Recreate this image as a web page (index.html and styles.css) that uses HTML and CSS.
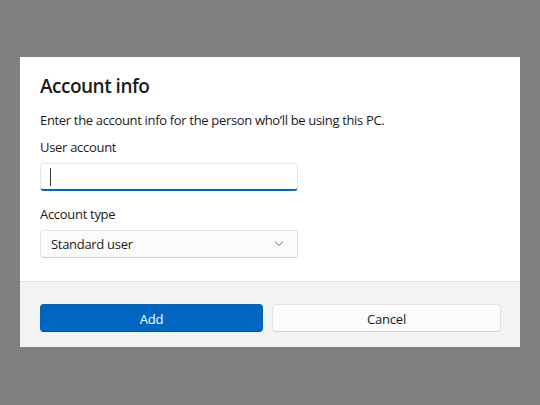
FILE: index.html
```html
<!DOCTYPE html>
<html>
<head>
<meta charset="utf-8">
<link rel="stylesheet" href="styles.css">
</head>
<body>
<div class="dialog">
  <div class="content">
    <h1 class="title">Account info</h1>
    <p class="desc">Enter the account info for the person who’ll be using this PC.</p>
    <div class="label">User account</div>
    <div class="input"><span class="caret"></span></div>
    <div class="label label2">Account type</div>
    <div class="select">
      <span>Standard user</span>
      <svg class="chev" width="10" height="6" viewBox="0 0 10 6"><path d="M1.5 1 L5 4.5 L8.5 1" fill="none" stroke="#6a6a6a" stroke-width="1" stroke-linecap="round" stroke-linejoin="round"/></svg>
    </div>
  </div>
  <div class="footer">
    <button class="btn primary">Add</button>
    <button class="btn secondary">Cancel</button>
  </div>
</div>
</body>
</html>
```

FILE: styles.css
```css
html, body {
  margin: 0;
  padding: 0;
}
body {
  background: #808080;
  width: 540px;
  height: 405px;
  overflow: hidden;
  font-family: "Open Sans", "Noto Sans", sans-serif;
  color: #1b1b1b;
  padding-top: 57px;
  box-sizing: border-box;
}
.dialog {
  width: 500px;
  height: 290px;
  margin-left: 20px;
  background: #ffffff;
  display: flex;
  flex-direction: column;
}
.content {
  flex: 1;
  padding: 15px 20px 0 20px;
}
.title {
  margin: 0;
  font-size: 19px;
  line-height: 28px;
  font-weight: 600;
  letter-spacing: -0.5px;
}
.desc {
  margin: 10px 0 0 0;
  font-size: 13px;
  line-height: 20px;
  letter-spacing: -0.33px;
}
.label {
  margin-top: 7px;
  font-size: 13px;
  line-height: 20px;
  letter-spacing: -0.3px;
}
.label2 {
  margin-top: 13px;
}
.input {
  margin-top: 6px;
  width: 258px;
  height: 28px;
  box-sizing: border-box;
  border: 1px solid #e5e5e5;
  border-bottom: 2px solid #0067c0;
  border-radius: 4px;
  background: #fff;
  display: flex;
  align-items: center;
  padding-left: 9px;
}
.caret {
  display: block;
  width: 1px;
  height: 18px;
  background: #333;
}
.select {
  margin-top: 6px;
  width: 258px;
  height: 28px;
  box-sizing: border-box;
  border: 1px solid #e3e3e3;
  border-bottom-color: #d2d2d2;
  border-radius: 4px;
  background: #fbfbfb;
  display: flex;
  align-items: center;
  justify-content: space-between;
  padding: 0 13px 0 10px;
  font-size: 13px;
  letter-spacing: -0.3px;
}
.chev {
  display: block;
}
.footer {
  height: 66px;
  box-sizing: border-box;
  background: #f3f3f3;
  border-top: 1px solid #e0e0e0;
  padding: 22px 19px 0 20px;
  display: grid;
  grid-template-columns: 223px 229px;
  column-gap: 9px;
  align-items: start;
}
.btn {
  height: 28px;
  border-radius: 4px;
  font-family: "Open Sans", "Noto Sans", sans-serif;
  font-size: 13px;
  letter-spacing: -0.2px;
  padding: 1px 0 0 0;
  margin: 0;
  cursor: default;
}
.primary {
  background: #0067c0;
  color: #ffffff;
  border: 1px solid #0062b8;
  border-bottom-color: #00539c;
}
.secondary {
  background: #fbfbfb;
  color: #1b1b1b;
  border: 1px solid #e3e3e3;
  border-bottom-color: #d0d0d0;
}
```
